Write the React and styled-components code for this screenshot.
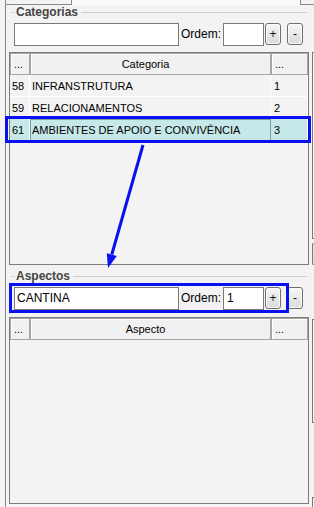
import React from 'react';
import styled, { createGlobalStyle } from 'styled-components';

const Global = createGlobalStyle`
  html, body { margin: 0; padding: 0; background: #f3f3f3; }
  body { font-family: "Liberation Sans", Arial, sans-serif; color: #000; }
  *, *::before, *::after { box-sizing: border-box; }
`;

const Screen = styled.div`
  position: relative;
  width: 314px;
  height: 507px;
  overflow: hidden;
  background: #f3f3f3;
  display: flex;
  flex-direction: column;
`;

const TabStrip = styled.div`
  display: flex;
  height: 5px;
  flex: none;
`;

const TabPiece = styled.div`
  flex: none;
  height: 5px;
  width: ${p => p.$w}px;
  background: ${p => (p.$active ? '#fafafa' : 'transparent')};
  border-left: ${p => (p.$left ? '1px solid #8a8a8a' : 'none')};
  border-right: ${p => (p.$right ? '1px solid #8a8a8a' : 'none')};
  border-bottom: ${p => (p.$bottom ? '1px solid #8a8a8a' : 'none')};
`;

const Body = styled.div`
  flex: 1;
  display: flex;
`;

const Gutter = styled.div`
  width: 5px;
  flex: none;
`;

const Page = styled.div`
  width: 307px;
  flex: none;
  border-left: 1px solid #8a8a8a;
  padding: 0 3px;
  display: flex;
  flex-direction: column;
`;

const RightStrip = styled.div`
  width: 2px;
  flex: none;
  display: flex;
  flex-direction: column;
`;

const EdgeBox = styled.div`
  flex: none;
  margin-top: ${p => p.$mt}px;
  height: ${p => p.$h}px;
  border-left: 1px solid #7a7a7a;
  border-top: 1px solid #7a7a7a;
  border-bottom: ${p => (p.$open ? 'none' : '1px solid #7a7a7a')};
  border-radius: ${p => (p.$round ? '3px 0 0 3px' : '0')};
  background: ${p => (p.$round ? '#e6e6e6' : 'transparent')};
`;

const Legend = styled.div`
  display: flex;
  align-items: center;
  height: 14px;
  margin-top: ${p => p.$mt}px;
  flex: none;
`;

const LegendLine = styled.div`
  height: 1px;
  background: #d2d2d2;
  flex: ${p => (p.$grow ? 1 : 'none')};
  width: ${p => (p.$grow ? 'auto' : '4px')};
  margin-left: ${p => (p.$grow ? '0' : '2px')};
  margin-right: ${p => (p.$grow ? '2px' : '0')};
`;

const LegendText = styled.span`
  font-family: "Liberation Sans", Arial, sans-serif;
  font-weight: bold;
  font-size: 12px;
  line-height: 14px;
  color: #454545;
  padding: 0 3px 0 1px;
`;

const FormRow = styled.div`
  display: flex;
  align-items: flex-start;
  height: 23px;
  padding-left: 5px;
  margin-top: 4px;
  flex: none;
`;

const TextInput = styled.div`
  width: ${p => p.$w}px;
  height: 23px;
  flex: none;
  margin-left: ${p => p.$ml || 0}px;
  background: #fff;
  border: 1px solid #7a7a7a;
  font-size: 12px;
  line-height: 21px;
  padding-left: ${p => p.$pl || 2}px;
  white-space: nowrap;
  overflow: hidden;
`;

const FieldLabel = styled.span`
  flex: none;
  margin-left: 2px;
  font-size: 12px;
  line-height: 23px;
  color: #000;
`;

const Button = styled.div`
  flex: none;
  width: 16px;
  height: 22px;
  margin-left: ${p => p.$ml}px;
  border: 1px solid #707070;
  border-radius: 3px;
  background: linear-gradient(#f7f7f7, #e8e8e8 50%, #dadada);
  box-shadow: inset 0 0 0 1px #fbfbfb;
  font-size: 12px;
  line-height: 20px;
  text-align: center;
  color: #111;
`;

const Grid = styled.div`
  flex: none;
  margin-top: ${p => p.$mt}px;
  height: ${p => p.$h}px;
  border: 1px solid #7c7c7c;
  display: flex;
  flex-direction: column;
  background: #f3f3f3;
`;

const Columns = styled.div`
  display: grid;
  grid-template-columns: 20px 241px 37px;
  height: 22px;
  flex: none;
  background: ${p => (p.$selected ? '#c6e8e8' : 'transparent')};
`;

const HeaderCell = styled.div`
  border: 1px solid #a6a6a6;
  box-shadow: inset 1px 1px 0 #ffffff;
  background: #f1f1f1;
  font-size: 11px;
  display: flex;
  align-items: flex-end;
  padding: 0 ${p => (p.$center ? '13px' : '0')} 4px 3px;
  justify-content: ${p => (p.$center ? 'center' : 'flex-start')};
  white-space: nowrap;
  overflow: hidden;
`;

const Cell = styled.div`
  border-right: 1px solid #ffffff;
  border-bottom: 1px solid #ffffff;
  font-size: 11px;
  display: flex;
  align-items: center;
  padding-left: ${p => p.$pl || 2}px;
  white-space: nowrap;
  overflow: hidden;
  ${p => p.$focus && `
    border: 1px solid #7f9f9f;
    padding-left: 1px;
  `}
`;

const Highlight = styled.div`
  position: absolute;
  left: ${p => p.$x}px;
  top: ${p => p.$y}px;
  width: ${p => p.$w}px;
  height: ${p => p.$h}px;
  border: 3px solid #0b10f2;
  pointer-events: none;
`;

const ArrowLayer = styled.svg`
  position: absolute;
  left: 0;
  top: 0;
  width: 314px;
  height: 507px;
  pointer-events: none;
`;

const categorias = [
  { id: '58', nome: 'INFRANSTRUTURA', ordem: '1' },
  { id: '59', nome: 'RELACIONAMENTOS', ordem: '2' },
  { id: '61', nome: 'AMBIENTES DE APOIO E CONVIVÊNCIA', ordem: '3', selected: true },
];

function GroupLegend({ title, mt }) {
  return (
    <Legend $mt={mt}>
      <LegendLine />
      <LegendText>{title}</LegendText>
      <LegendLine $grow />
    </Legend>
  );
}

function EntryRow({ value, ordem }) {
  return (
    <FormRow>
      <TextInput $w={165}>{value}</TextInput>
      <FieldLabel>Ordem:</FieldLabel>
      <TextInput $w={41} $ml={2} $pl={3}>{ordem}</TextInput>
      <Button $ml={1}>+</Button>
      <Button $ml={6}>-</Button>
    </FormRow>
  );
}

function GridHeader({ title }) {
  return (
    <Columns>
      <HeaderCell>...</HeaderCell>
      <HeaderCell $center>{title}</HeaderCell>
      <HeaderCell>...</HeaderCell>
    </Columns>
  );
}

export default function App() {
  return (
    <>
      <Global />
      <Screen>
        <TabStrip>
          <TabPiece $w={5} />
          <TabPiece $w={67} $left $right $bottom />
          <TabPiece $w={229} $active $right />
          <TabPiece $w={13} $bottom />
        </TabStrip>
        <Body>
          <Gutter />
          <Page>
            <GroupLegend title="Categorias" mt={0} />
            <EntryRow value="" ordem="" />
            <Grid $mt={6} $h={213}>
              <GridHeader title="Categoria" />
              {categorias.map(c => (
                <Columns key={c.id} $selected={c.selected}>
                  <Cell>{c.id}</Cell>
                  <Cell $focus={c.selected}>{c.nome}</Cell>
                  <Cell $pl={3}>{c.ordem}</Cell>
                </Columns>
              ))}
            </Grid>
            <GroupLegend title="Aspectos" mt={4} />
            <EntryRow value="CANTINA" ordem="1" />
            <Grid $mt={7} $h={187}>
              <GridHeader title="Aspecto" />
            </Grid>
          </Page>
          <RightStrip>
            <EdgeBox $mt={47} $h={187} />
            <EdgeBox $mt={4} $h={22} $round />
            <EdgeBox $mt={54} $h={104} />
            <EdgeBox $mt={74} $h={10} $open />
          </RightStrip>
        </Body>

        <Highlight $x={5} $y={116} $w={306} $h={27} />
        <Highlight $x={9} $y={283} $w={280} $h={30} />
        <ArrowLayer viewBox="0 0 314 507">
          <line x1="143" y1="145" x2="111.8" y2="254.5" stroke="#0b10f2" strokeWidth="3" />
          <polygon points="108,268 116.8,255.9 106.8,253.2" fill="#0b10f2" />
        </ArrowLayer>
      </Screen>
    </>
  );
}
